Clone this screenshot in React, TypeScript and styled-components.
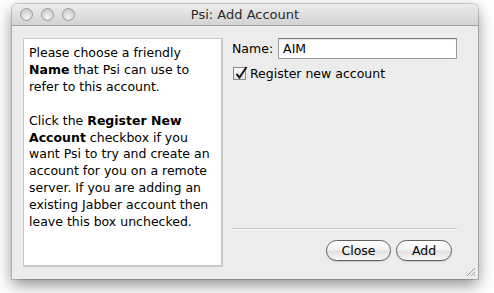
import React from "react";
import styled, { createGlobalStyle } from "styled-components";

const GlobalStyle = createGlobalStyle`
  html, body {
    margin: 0;
    padding: 0;
    background: #ffffff;
  }
  body {
    font-family: "DejaVu Sans", "Noto Sans", sans-serif;
    font-size: 12px;
    color: #000;
  }
`;

const Page = styled.div`
  width: 494px;
  height: 293px;
  padding: 4px 0 0 12px;
  box-sizing: border-box;
`;

const Window = styled.div`
  width: 466px;
  height: 275px;
  background: #ececec;
  border-radius: 5px 5px 0 0;
  box-shadow: 0 0 0 1px rgba(0, 0, 0, 0.16), 0 6px 16px rgba(0, 0, 0, 0.45);
  display: flex;
  flex-direction: column;
  position: relative;
`;

const TitleBar = styled.div`
  height: 21px;
  flex: none;
  border-bottom: 1px solid #a2a2a2;
  border-radius: 5px 5px 0 0;
  background: linear-gradient(#ececec, #d3d3d3);
  display: flex;
  align-items: center;
  position: relative;
`;

const Lights = styled.div`
  display: flex;
  gap: 8px;
  padding-left: 8px;
`;

const Light = styled.span`
  width: 11px;
  height: 11px;
  border-radius: 50%;
  border: 1px solid #9c9c9c;
  background: radial-gradient(circle at 50% 75%, #f4f4f4, #cfcfcf 70%);
`;

const Title = styled.div`
  position: absolute;
  left: 0;
  right: 0;
  top: 3px;
  text-align: center;
  font-size: 13px;
  color: #2a2a2a;
`;

const Body = styled.div`
  flex: 1;
  display: flex;
  padding: 12px 21px 12px 11px;
  gap: 9px;
`;

const HelpPanel = styled.div`
  width: 187px;
  flex: none;
  background: #fff;
  border: 2px solid #c9c9c9;
  border-width: 1px 2px 2px 1px;
  padding: 6px 5px 0 5px;
  font-size: 12.5px;
  line-height: 16.9px;
  color: #000;

  p {
    margin: 0 0 16.9px 0;
  }
`;

const Column = styled.div`
  flex: 1;
  display: flex;
  flex-direction: column;
`;

const FieldRow = styled.div`
  display: flex;
  align-items: center;
  gap: 5px;
  font-size: 12.5px;
`;

const TextInput = styled.div`
  flex: 1;
  height: 19px;
  border: 1px solid #9a9a9a;
  border-top-color: #7b7b7b;
  background: #fff;
  box-shadow: inset 0 1px 1px rgba(0, 0, 0, 0.12);
  padding-left: 4px;
  display: flex;
  align-items: center;
  font-size: 12.5px;
`;

const CheckRow = styled.label`
  display: flex;
  align-items: center;
  gap: 4px;
  margin-top: 7px;
  font-size: 12.5px;
`;

const Box = styled.span`
  width: 13px;
  height: 13px;
  box-sizing: border-box;
  border: 1px solid #8d8d8d;
  background: linear-gradient(#fafafa, #e4e4e4);
  position: relative;
  margin-left: 1px;

  svg {
    position: absolute;
    left: 0px;
    top: -3px;
  }
`;

const Spacer = styled.div`
  flex: 1;
`;

const Separator = styled.div`
  height: 1px;
  background: #c4c4c4;
  border-bottom: 1px solid #fafafa;
`;

const Buttons = styled.div`
  display: flex;
  justify-content: flex-end;
  gap: 5px;
  padding: 10px 5px 6px 0;
`;

const PillButton = styled.button<{ $w: number }>`
  width: ${(p) => p.$w}px;
  height: 21px;
  border-radius: 11px;
  border: 1px solid #5f5f5f;
  background: linear-gradient(#ffffff 0%, #f3f3f3 45%, #e2e2e2 55%, #f7f7f7 100%);
  box-shadow: 0 1px 1px rgba(0, 0, 0, 0.15);
  font-family: "DejaVu Sans", "Noto Sans", sans-serif;
  font-size: 12.5px;
  color: #000;
  padding: 0;
`;

const Grip = styled.svg`
  position: absolute;
  right: 2px;
  bottom: 2px;
`;

export default function App() {
  return (
    <>
      <GlobalStyle />
      <Page>
        <Window>
          <TitleBar>
            <Lights>
              <Light />
              <Light />
              <Light />
            </Lights>
            <Title>Psi: Add Account</Title>
          </TitleBar>
          <Body>
            <HelpPanel>
              <p>
                Please choose a friendly <b>Name</b> that Psi can use to refer to this account.
              </p>
              <p>
                Click the <b>Register New Account</b> checkbox if you want Psi to try and create an
                account for you on a remote server. If you are adding an existing Jabber account
                then leave this box unchecked.
              </p>
            </HelpPanel>
            <Column>
              <FieldRow>
                <span>Name:</span>
                <TextInput>AIM</TextInput>
              </FieldRow>
              <CheckRow>
                <Box>
                  <svg width="14" height="15" viewBox="0 0 14 15">
                    <path d="M2.5 9 L5.5 12.5 L12.5 2" fill="none" stroke="#1e1e1e" strokeWidth="2" />
                  </svg>
                </Box>
                <span>Register new account</span>
              </CheckRow>
              <Spacer />
              <Separator />
              <Buttons>
                <PillButton $w={65}>Close</PillButton>
                <PillButton $w={56}>Add</PillButton>
              </Buttons>
            </Column>
          </Body>
          <Grip width="12" height="12" viewBox="0 0 12 12">
            <path d="M11 3 L3 11 M11 7 L7 11 M11 10 L10 11" stroke="#9a9a9a" strokeWidth="1" />
          </Grip>
        </Window>
      </Page>
    </>
  );
}
